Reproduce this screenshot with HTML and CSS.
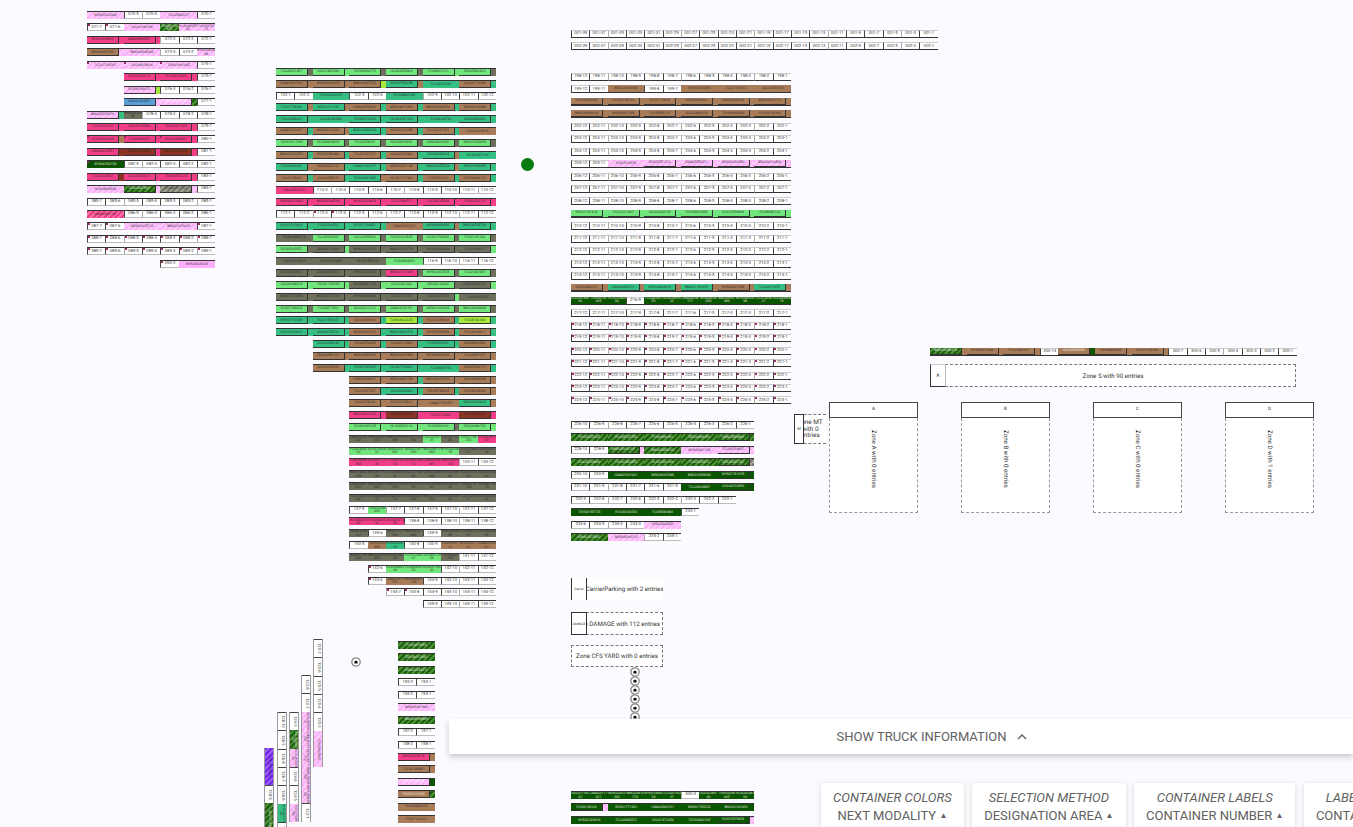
FILE: index.html
```html
<!DOCTYPE html>
<html lang="en">
<head>
  <meta charset="UTF-8" />
  <meta name="viewport" content="width=device-width, initial-scale=1.0" />
  <title>Yard Overview</title>
  <link rel="stylesheet" href="styles.css">
</head>
<body>

  <div class="yard">
    <!-- stacks are filled in by script.js -->
    <div class="block edge-top" id="stack-a"></div>
    <div class="block edge-top" id="stack-b"></div>
    <div class="block edge-bottom" id="stack-strip"></div>
    <div class="block edge-bottom" id="stack-c"></div>
    <div class="block edge-top" id="stack-d"></div>
    <div class="block edge-bottom" id="stack-e"></div>
    <div class="block edge-top" id="stack-f"></div>
    <div class="block edge-top" id="stack-g"></div>
    <div class="block vertical" id="col-1"></div>
    <div class="block vertical" id="col-2"></div>
    <div class="block vertical" id="col-3"></div>
    <div class="block vertical" id="col-4"></div>
    <div class="block vertical" id="col-5"></div>

    <div class="dot"></div>

    <div class="zone zone-carrier">
      <div class="zone-text">Zone CarrierParking with 2 entries</div>
      <div class="zone-tag">Carrier</div>
    </div>
    <div class="zone zone-damage">
      <div class="zone-text">Zone DAMAGE with 112 entries</div>
      <div class="zone-tag">DAMAGE</div>
    </div>
    <div class="zone zone-cfs">
      <div class="zone-text">Zone CFS YARD with 0 entries</div>
    </div>
    <div class="zone zone-s">
      <div class="zone-text">Zone S with 90 entries</div>
      <div class="zone-tag">A</div>
    </div>
    <div class="zone zone-mt">
      <div class="zone-text">Zone MT with 0 entries</div>
      <div class="zone-tag">M</div>
    </div>

    <div class="tall-zones">
      <div class="tall-zone">
        <div class="tall-head">A</div>
        <div class="tall-body"><span>Zone A with 0 entries</span></div>
      </div>
      <div class="tall-zone">
        <div class="tall-head">B</div>
        <div class="tall-body"><span>Zone B with 0 entries</span></div>
      </div>
      <div class="tall-zone">
        <div class="tall-head">C</div>
        <div class="tall-body"><span>Zone C with 0 entries</span></div>
      </div>
      <div class="tall-zone">
        <div class="tall-head">D</div>
        <div class="tall-body"><span>Zone D with 1 entries</span></div>
      </div>
    </div>

    <div class="truck-icon single" data-icon></div>
    <div class="truck-chain">
      <div class="truck-icon" data-icon></div>
      <div class="truck-icon" data-icon></div>
      <div class="truck-icon" data-icon></div>
      <div class="truck-icon" data-icon></div>
      <div class="truck-icon" data-icon></div>
      <div class="truck-icon" data-icon></div>
    </div>
  </div>

  <div class="truck-bar">
    <span>SHOW TRUCK INFORMATION</span>
    <svg width="12" height="12" viewBox="0 0 12 12"><path d="M2 8 L6 4 L10 8" fill="none" stroke="#616161" stroke-width="1.4"/></svg>
  </div>

  <div class="controls">
    <div class="control">
      <em>CONTAINER COLORS</em>
      <strong>NEXT MODALITY <i>&#9650;</i></strong>
    </div>
    <div class="control">
      <em>SELECTION METHOD</em>
      <strong>DESIGNATION AREA <i>&#9650;</i></strong>
    </div>
    <div class="control">
      <em>CONTAINER LABELS</em>
      <strong>CONTAINER NUMBER <i>&#9650;</i></strong>
    </div>
    <div class="control">
      <em>LABEL POSITION</em>
      <strong>CONTAINER TYPE <i>&#9650;</i></strong>
    </div>
  </div>

  <script src="script.js"></script>
</body>
</html>
```

FILE: styles.css
```css
html, body {
  margin: 0;
  padding: 0;
  height: 100%;
  overflow: hidden;
}

body {
  background-color: #fafaff;
  font-family: Roboto, sans-serif;
  color: #222;
}

.yard {
  position: relative;
  width: 1353px;
  height: 827px;
  overflow: hidden;
  text-rendering: geometricPrecision;
}

/* stacks sit on a free canvas, their place is the data */
.block {
  position: absolute;
  --bay: 18.33px;
  --pitch: 4.45px;
}

#stack-a { left: 87px; top: 11px; }
#stack-b { left: 276px; top: 68px; --pitch: 3.83px; }
#stack-strip { left: 571px; top: 30px; }
#stack-c { left: 571px; top: 73px; }
#stack-d { left: 571px; top: 421px; }
#stack-e { left: 930px; top: 348px; }
#stack-f { left: 398px; top: 641px; }
#stack-g { left: 571px; top: 791px; }
#col-1 { left: 313px; top: 639px; }
#col-2 { left: 301px; top: 675px; }
#col-3 { left: 289px; top: 712px; }
#col-4 { left: 277px; top: 712px; }
#col-5 { left: 264px; top: 748px; }

.row {
  display: flex;
  height: 8px;
  margin-bottom: var(--pitch);
}

.vertical .row {
  flex-direction: column;
  width: 8px;
  height: auto;
  margin: 0;
  border-left: 1px solid #999;
  border-right: 1px solid #999;
}

.cell {
  position: relative;
  flex: none;
  box-sizing: border-box;
  width: var(--bay);
  height: 100%;
  overflow: hidden;
  font-size: 3.4px;
  line-height: 3.4px;
  text-align: center;
}

.edge-top .cell { border-top: 1px solid #333; }
.edge-bottom .cell { border-bottom: 1px solid #333; }

.span-2 { width: calc(var(--bay) * 2); }
.span-3 { width: calc(var(--bay) * 3); }
.empty { visibility: hidden; }

.white {
  display: flex;
  align-items: center;
  justify-content: center;
  background: #fff;
  border-left: 1px solid #444;
  color: #444;
  font-size: 4.2px;
}

.white:nth-child(4n+3) { border-left-color: #aaa; }
.edge-top .white { border-bottom: 1px solid #bbb; }
.edge-bottom .white { border-top: 1px solid #ccc; }

.mark::before {
  content: "";
  position: absolute;
  top: 0;
  left: 0;
  width: 2px;
  height: 2px;
  background: #a02a68;
}

.box {
  display: flex;
  align-items: center;
  justify-content: center;
  box-sizing: border-box;
  width: 100%;
  height: 100%;
  overflow: hidden;
  word-break: break-all;
}

.box span { opacity: 0.8; }

.has-inner .box {
  width: 87%;
  border-right: 1px solid #333;
  border-bottom: 1px solid #333;
}

.vertical .cell {
  width: 100%;
  height: var(--bay);
  writing-mode: vertical-rl;
}

.vertical .span-2 { height: calc(var(--bay) * 2); }
.vertical .white {
  border-left: none;
  border-top: 1px solid #444;
}

/* container colours */
.c-P { background: #f23e87; }
.c-B { background: #a87c58; }
.c-T { background: #35bf82; }
.c-L { background: #70e67c; }
.c-G { background: #6f6f5e; }
.c-D { background: #0c5500; color: #fff; }
.c-R { background: #8d3524; }
.c-Y { background: #a5e83a; }
.c-C { background: #5a9fd6; }
.c-S { background: #fdaffb; }
.c-H { background: repeating-linear-gradient(135deg, #ffb0fb 0 2px, #f9ccf9 2px 4px); }
.c-J { background: repeating-linear-gradient(135deg, #1d610f 0 2px, #4d8f35 2px 4px); color: #fff; }
.c-K { background: repeating-linear-gradient(135deg, #77776a 0 2px, #a3a394 2px 4px); }
.c-Q { background: repeating-linear-gradient(135deg, #f23e87 0 2px, #ff70a8 2px 4px); }
.c-V { background: repeating-linear-gradient(135deg, #7526ee 0 2px, #9a5cf6 2px 4px); }

.dot {
  position: absolute;
  left: 521px;
  top: 158px;
  width: 13px;
  height: 13px;
  border-radius: 50%;
  background: #087a0e;
}

.zone {
  position: absolute;
  display: flex;
  box-sizing: border-box;
  font-size: 6.2px;
  color: #333;
}

/* the tag lies over the start of the zone label */
.zone-tag {
  position: absolute;
  left: 0;
  top: 0;
  display: flex;
  align-items: center;
  justify-content: center;
  box-sizing: border-box;
  width: 16px;
  height: 100%;
  background: #fff;
  border: 1px solid #333;
  font-size: 3.2px;
  overflow: hidden;
}

.zone-text {
  flex: 1;
  display: flex;
  align-items: center;
  justify-content: center;
  box-sizing: border-box;
  min-width: 0;
  background: #fff;
  border: 1px dashed #777;
  white-space: nowrap;
  overflow: hidden;
}

.zone-carrier { left: 571px; top: 578px; width: 92px; height: 22px; }
.zone-carrier .zone-tag { border-width: 0 1px; }
.zone-carrier .zone-text { border: none; }

.zone-damage { left: 571px; top: 612px; width: 92px; height: 23px; }
.zone-cfs { left: 571px; top: 645px; width: 92px; height: 22px; }

.zone-s { left: 930px; top: 364px; width: 366px; height: 23px; }
.zone-s .zone-tag { border-top: 1px solid #ccc; border-right-color: #bbb; font-size: 5px; }

.zone-mt { left: 794px; top: 414px; width: 32px; height: 30px; line-height: 6.6px; font-size: 6.4px; }
.zone-mt .zone-tag { width: 10px; font-size: 4px; }
.zone-mt .zone-text { white-space: normal; text-align: center; padding: 0; border-width: 1px 0; }

.tall-zones {
  position: absolute;
  left: 829px;
  top: 402px;
  display: flex;
  gap: 43px;
}

.tall-zone {
  display: flex;
  flex-direction: column;
  width: 89px;
  height: 111px;
}

.tall-head {
  box-sizing: border-box;
  height: 16px;
  line-height: 14px;
  background: #fff;
  border: 1px solid #444;
  text-align: center;
  font-size: 4.5px;
}

.tall-body {
  flex: 1;
  display: flex;
  justify-content: center;
  padding-top: 12px;
  background: #fff;
  border: 1px dashed #999;
  border-top: none;
  font-size: 6.2px;
  color: #333;
}

.tall-body span { writing-mode: vertical-rl; }

.truck-icon {
  box-sizing: border-box;
  width: 10px;
  height: 10px;
  margin-bottom: -1px;
}

.truck-icon svg { display: block; }

.truck-icon.single {
  position: absolute;
  left: 351px;
  top: 657px;
}

.truck-chain {
  position: absolute;
  left: 630px;
  top: 667px;
}

.truck-bar {
  position: absolute;
  left: 449px;
  top: 719px;
  box-sizing: border-box;
  width: 904px;
  height: 35px;
  padding-left: 62px;
  display: flex;
  align-items: center;
  justify-content: center;
  gap: 9px;
  background: #fff;
  color: #616161;
  font-size: 13px;
  box-shadow: 0 3px 6px rgba(0,0,0,0.2);
}

.controls {
  position: absolute;
  left: 821px;
  top: 783px;
  display: flex;
  gap: 8.5px;
  width: max-content;
}

.control {
  display: flex;
  flex-direction: column;
  align-items: center;
  height: 60px;
  padding: 7px 12px 0;
  background: #fff;
  border-radius: 3px;
  color: #616161;
  box-shadow: 0 1px 5px rgba(0,0,0,0.15);
}

.control em {
  font-size: 13px;
  line-height: 16px;
}

.control strong {
  font-weight: 400;
  font-size: 13px;
  line-height: 20px;
}

.control i {
  font-style: normal;
  font-size: 8px;
  vertical-align: 2px;
}
```

FILE: script.js
```js
document.addEventListener("DOMContentLoaded", function () {
  // token = [count][colour][inner colour][!]   w white, x marked white, _ free slot
  // colours: P pink, B brown, T teal, L light green, G grey, D dark green,
  // H pink hatch, J green hatch, K grey hatch, Q hot hatch, V purple hatch,
  // R red, Y lime, C blue, S plain pink
  const stacks = {
    "stack-a": { base: 70, rows: [
      "2H w w 2H w", "x x 2H J H H", "2PP 2PP 3w", "2HB 2H w w H", "2H! 2H! 2H! w",
      "2_ 2PP 2PP w", "2_ 2YH 3w", "2_ 2HC 2JH w", "2TH G 4w", "2PP 2PP 2PP w",
      "2BP! 2PP! 2PP! w", "2RP 2PR 2PR w", "2D! 5w", "2RP 2PP 2PP w", "2H 2HJ 2HK w",
      "7w", "2Q 5w", "x x 2H 2H x", "7x", "7x", "4_ x 2S"
    ]},
    "stack-b": { base: 100, up: true, rows: [
      "2GL 2LL 2GL 2GL 2LL 2GL", "2BB 2BB 2YB 2BT 2T 2TB", "2w 2T 2w 2T 4w", "2BT 2BT 2TB 2TB 2TB 2TB",
      "2TT 2T 2TT 2TT 2T 2TT", "2TB 2BB 2TT 2TB 2TB 2B", "2GL 2GL 2GL 2GL 2GL 2GL",
      "2TB 2TB 2TB 2TB 2BT 2T", "2BT 2TB 2TT 2TB 2BT 2TT", "2TB 2TB 2BT 2TB 2TB 2TB",
      "2P 10w", "2PP 2PP 2PP 2PP 2PP 2PP", "2w x x 8w", "2TT 2TT 2TT 2B 2BT 2TT",
      "2G 2GL 2GL 2GL 2GL 2GL", "2GL 2LG 2GG 2GG 2GG 2LG", "2G 2G 2G 2L 4w", "2GG 2GG 2GG 2GP 2GL 2GL",
      "2LL 2LL 2LG 2LL 2GL 2LG", "2GG 2GG 2GG 2GG 2LG 2G", "2GL 2GL 2GL 2GL 2GL 2GL",
      "2TT 2TT 2TB 2TY 2TB 2TY", "2TT 2TT 2TB 2TT 2TB 2TB", "2_ 2TT 2TB 2TB 2TT 2TB",
      "2_ 2BB 2BB 2BB 2BB 2BB", "2_ 2TB 2TT 2TT 2T 2TB", "4_ 2BB 2TB 2BB 2BB", "4_ 2TB 2TT 2TB 2BB",
      "4_ 2BB 2BB 2B 2BT", "4_ 2PP 2PR 2P 2PR", "4_ 2LL 2LL 2GL 2LL",
      "4_ G G G G L G L P", "4_ L L L L L L G G", "4_ P P P P P P w w", "4_ G G G G G G G G",
      "4_ G G G G G G G G", "4_ G G G G G G G G", "4_ w L 6w", "4_ P P P 5w", "4_ G w G G w G G G",
      "4_ w B T w w B B B", "4_ G G G L L G w w", "5_ x L L L 3w", "5_ x B B 4w", "6_ x x 4w", "8_ 4w"
    ]},
    "stack-strip": { base: 1, odd: true, rows: ["20w", "20w"] },
    "stack-c": { base: 198, rows: [
      "12w", "2w 2B 2w 2B 2B 2B", "2BB 2BB 2BB 2BB 2BB 2BB", "2BB 2BB 2BB 2BB 2BB 2BB", "12w", "12w", "12w",
      "2w 2H 2HH 2HH 2HH 2HH", "12w", "12w", "12w", "2LL 2LL 2LL 2LL 2LL 2LL", "12w", "12w", "12w", "12w", "12w",
      "2BB 2BT 2BT 2BT 2BB 2BT", "D D D w D D D D D D D D", "12w", "12x", "12x", "12x", "12x", "12x", "12x", "12x"
    ]},
    "stack-d": { base: 226, rows: [
      "10w", "2J 2J 2J 2J 2JJ", "2w 2HJ 2J 2H 2HH", "2J 2J 2J 2J 2KJ", "2w 2D 2D 2D 2DD",
      "6w 2D 2DD", "9w", "2D 2D 2D w", "4w 2H", "2J 2H 2w"
    ]},
    "stack-e": { base: 300, rows: ["2BJ 2BB 2BB w 2DB 2BB 2BB 7w"] },
    "stack-f": { base: 150, rows: [
      "2J", "2J", "2J", "2w", "2w", "2H", "2J", "2w", "2w", "2BP", "2BB", "2DH", "2JB", "2B", "2B"
    ]},
    "stack-g": { base: 400, rows: ["D D D D D D w D D D", "2HD 2D 2D 2D 2D", "2D 2D 2D 2D 2HD"] },
    "col-1": { base: 120, rows: ["5w 2H"] },
    "col-2": { base: 122, rows: ["2w H H H H H w"] },
    "col-3": { base: 124, rows: ["w J H 2w 4H"] },
    "col-4": { base: 126, rows: ["5w T 4w"] },
    "col-5": { base: 128, rows: ["2V w 2J 2J"] }
  };

  const prefixes = ["MSKU", "TCLU", "HLXU", "CMAU", "NYKU", "TGHU", "SEGU", "BMOU", "OOLU", "FCIU"];
  let seed = 7;

  function containerNumber() {
    seed = (seed * 9301 + 49297) % 233280;
    const digits = String(1000000 + (seed * 37) % 8999999).slice(0, 7);
    return prefixes[seed % prefixes.length] + digits;
  }

  function makeCell(span, extra, label) {
    const cell = document.createElement('div');
    cell.className = 'cell ' + (span > 1 ? 'span-' + span + ' ' : '') + extra;
    if (label) cell.textContent = label;
    return cell;
  }

  function addToken(row, token, state) {
    const m = token.match(/^(\d*)([a-zA-Z_])([A-Z]?)(!?)$/);
    const count = m[1] ? parseInt(m[1]) : 1;

    if (m[2] === '_') {
      for (let i = 0; i < count; i++) {
        row.appendChild(makeCell(1, 'empty'));
        state.col++;
      }
      return;
    }

    if (m[2] === 'w' || m[2] === 'x') {
      for (let i = 0; i < count; i++) {
        row.appendChild(makeCell(1, 'white' + (m[2] === 'x' ? ' mark' : ''), state.label()));
        state.col++;
      }
      return;
    }

    // coloured container, count is its length in bays
    const cell = makeCell(count, 'c-' + m[2] + (m[3] ? ' has-inner' : '') + (m[4] ? ' mark' : ''));
    const box = document.createElement('div');
    box.className = 'box' + (m[3] ? ' c-' + m[3] : '');
    const text = document.createElement('span');
    text.textContent = containerNumber();
    box.appendChild(text);
    cell.appendChild(box);
    row.appendChild(cell);
    state.col += count;
  }

  Object.keys(stacks).forEach(function (id) {
    const stack = stacks[id];
    const block = document.getElementById(id);

    stack.rows.forEach(function (line, r) {
      const tokens = line.split(' ');
      const total = tokens.reduce(function (sum, t) {
        const n = t.match(/^\d+/);
        return sum + (n ? parseInt(n[0]) : 1);
      }, 0);
      const row = document.createElement('div');
      row.className = 'row';

      const state = { col: 0, label: null };
      state.label = function () {
        const bay = String(stack.base + r).padStart(3, '0');
        let pos = stack.up ? state.col + 1 : total - state.col;
        if (stack.odd) pos = 2 * pos - 1;
        return bay + '-' + pos;
      };

      tokens.forEach(function (t) { addToken(row, t, state); });
      block.appendChild(row);
    });
  });

  const icon = '<svg width="10" height="10" viewBox="0 0 10 10">' +
    '<circle cx="5" cy="5" r="4.2" fill="#fff" stroke="#888" stroke-width="1.3"/>' +
    '<path d="M3.4 6.4 V4.4 L5 3.4 L6.6 4.4 V6.4 Z" fill="#111"/></svg>';

  document.querySelectorAll('[data-icon]').forEach(function (el) {
    el.innerHTML = icon;
  });
});
```
